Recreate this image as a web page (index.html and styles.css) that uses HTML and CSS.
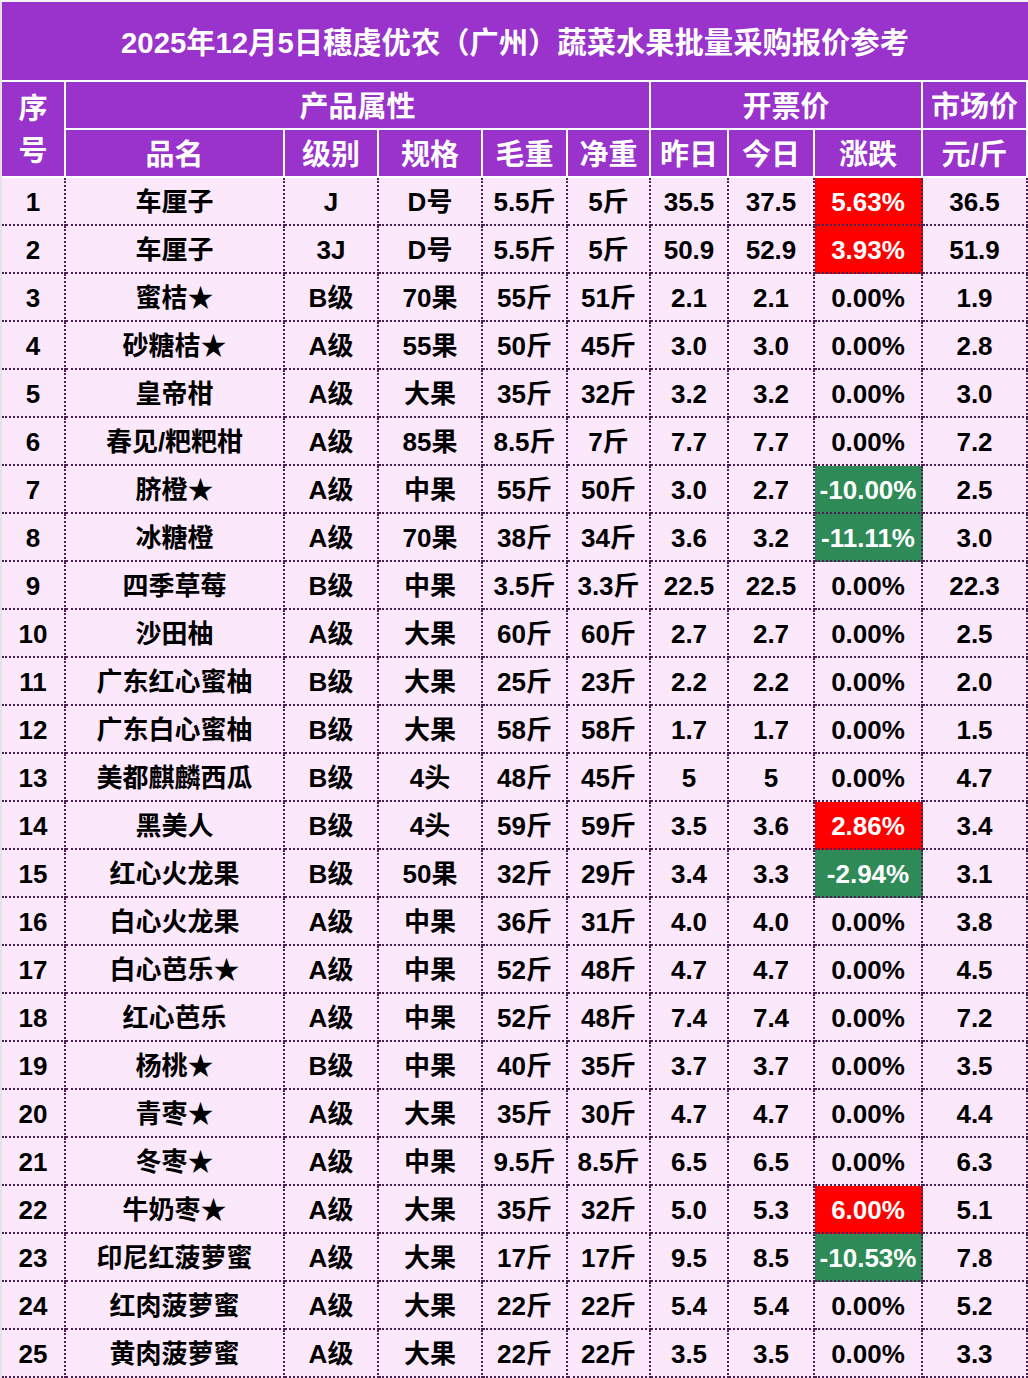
FILE: index.html
```html
<!DOCTYPE html>
<html lang="zh-CN">
<head>
<meta charset="utf-8">
<title>报价参考</title>
<link rel="stylesheet" href="styles.css">
</head>
<body>
<div class="page">
<div class="sheet">
  <div class="h title">2025年12月5日穗虔优农（广州）蔬菜水果批量采购报价参考</div>
  <div class="h seq">序<br>号</div>
  <div class="h span5">产品属性</div>
  <div class="h span3">开票价</div>
  <div class="h">市场价</div>
  <div class="h">品名</div><div class="h">级别</div><div class="h">规格</div><div class="h">毛重</div><div class="h">净重</div><div class="h">昨日</div><div class="h">今日</div><div class="h">涨跌</div><div class="h">元/斤</div>

  <div class="d">1</div><div class="d">车厘子</div><div class="d">J</div><div class="d">D号</div><div class="d">5.5斤</div><div class="d">5斤</div><div class="d">35.5</div><div class="d">37.5</div><div class="d up">5.63%</div><div class="d">36.5</div>
  <div class="d">2</div><div class="d">车厘子</div><div class="d">3J</div><div class="d">D号</div><div class="d">5.5斤</div><div class="d">5斤</div><div class="d">50.9</div><div class="d">52.9</div><div class="d up">3.93%</div><div class="d">51.9</div>
  <div class="d">3</div><div class="d">蜜桔★</div><div class="d">B级</div><div class="d">70果</div><div class="d">55斤</div><div class="d">51斤</div><div class="d">2.1</div><div class="d">2.1</div><div class="d">0.00%</div><div class="d">1.9</div>
  <div class="d">4</div><div class="d">砂糖桔★</div><div class="d">A级</div><div class="d">55果</div><div class="d">50斤</div><div class="d">45斤</div><div class="d">3.0</div><div class="d">3.0</div><div class="d">0.00%</div><div class="d">2.8</div>
  <div class="d">5</div><div class="d">皇帝柑</div><div class="d">A级</div><div class="d">大果</div><div class="d">35斤</div><div class="d">32斤</div><div class="d">3.2</div><div class="d">3.2</div><div class="d">0.00%</div><div class="d">3.0</div>
  <div class="d">6</div><div class="d">春见/粑粑柑</div><div class="d">A级</div><div class="d">85果</div><div class="d">8.5斤</div><div class="d">7斤</div><div class="d">7.7</div><div class="d">7.7</div><div class="d">0.00%</div><div class="d">7.2</div>
  <div class="d">7</div><div class="d">脐橙★</div><div class="d">A级</div><div class="d">中果</div><div class="d">55斤</div><div class="d">50斤</div><div class="d">3.0</div><div class="d">2.7</div><div class="d down">-10.00%</div><div class="d">2.5</div>
  <div class="d">8</div><div class="d">冰糖橙</div><div class="d">A级</div><div class="d">70果</div><div class="d">38斤</div><div class="d">34斤</div><div class="d">3.6</div><div class="d">3.2</div><div class="d down">-11.11%</div><div class="d">3.0</div>
  <div class="d">9</div><div class="d">四季草莓</div><div class="d">B级</div><div class="d">中果</div><div class="d">3.5斤</div><div class="d">3.3斤</div><div class="d">22.5</div><div class="d">22.5</div><div class="d">0.00%</div><div class="d">22.3</div>
  <div class="d">10</div><div class="d">沙田柚</div><div class="d">A级</div><div class="d">大果</div><div class="d">60斤</div><div class="d">60斤</div><div class="d">2.7</div><div class="d">2.7</div><div class="d">0.00%</div><div class="d">2.5</div>
  <div class="d">11</div><div class="d">广东红心蜜柚</div><div class="d">B级</div><div class="d">大果</div><div class="d">25斤</div><div class="d">23斤</div><div class="d">2.2</div><div class="d">2.2</div><div class="d">0.00%</div><div class="d">2.0</div>
  <div class="d">12</div><div class="d">广东白心蜜柚</div><div class="d">B级</div><div class="d">大果</div><div class="d">58斤</div><div class="d">58斤</div><div class="d">1.7</div><div class="d">1.7</div><div class="d">0.00%</div><div class="d">1.5</div>
  <div class="d">13</div><div class="d">美都麒麟西瓜</div><div class="d">B级</div><div class="d">4头</div><div class="d">48斤</div><div class="d">45斤</div><div class="d">5</div><div class="d">5</div><div class="d">0.00%</div><div class="d">4.7</div>
  <div class="d">14</div><div class="d">黑美人</div><div class="d">B级</div><div class="d">4头</div><div class="d">59斤</div><div class="d">59斤</div><div class="d">3.5</div><div class="d">3.6</div><div class="d up">2.86%</div><div class="d">3.4</div>
  <div class="d">15</div><div class="d">红心火龙果</div><div class="d">B级</div><div class="d">50果</div><div class="d">32斤</div><div class="d">29斤</div><div class="d">3.4</div><div class="d">3.3</div><div class="d down">-2.94%</div><div class="d">3.1</div>
  <div class="d">16</div><div class="d">白心火龙果</div><div class="d">A级</div><div class="d">中果</div><div class="d">36斤</div><div class="d">31斤</div><div class="d">4.0</div><div class="d">4.0</div><div class="d">0.00%</div><div class="d">3.8</div>
  <div class="d">17</div><div class="d">白心芭乐★</div><div class="d">A级</div><div class="d">中果</div><div class="d">52斤</div><div class="d">48斤</div><div class="d">4.7</div><div class="d">4.7</div><div class="d">0.00%</div><div class="d">4.5</div>
  <div class="d">18</div><div class="d">红心芭乐</div><div class="d">A级</div><div class="d">中果</div><div class="d">52斤</div><div class="d">48斤</div><div class="d">7.4</div><div class="d">7.4</div><div class="d">0.00%</div><div class="d">7.2</div>
  <div class="d">19</div><div class="d">杨桃★</div><div class="d">B级</div><div class="d">中果</div><div class="d">40斤</div><div class="d">35斤</div><div class="d">3.7</div><div class="d">3.7</div><div class="d">0.00%</div><div class="d">3.5</div>
  <div class="d">20</div><div class="d">青枣★</div><div class="d">A级</div><div class="d">大果</div><div class="d">35斤</div><div class="d">30斤</div><div class="d">4.7</div><div class="d">4.7</div><div class="d">0.00%</div><div class="d">4.4</div>
  <div class="d">21</div><div class="d">冬枣★</div><div class="d">A级</div><div class="d">中果</div><div class="d">9.5斤</div><div class="d">8.5斤</div><div class="d">6.5</div><div class="d">6.5</div><div class="d">0.00%</div><div class="d">6.3</div>
  <div class="d">22</div><div class="d">牛奶枣★</div><div class="d">A级</div><div class="d">大果</div><div class="d">35斤</div><div class="d">32斤</div><div class="d">5.0</div><div class="d">5.3</div><div class="d up">6.00%</div><div class="d">5.1</div>
  <div class="d">23</div><div class="d">印尼红菠萝蜜</div><div class="d">A级</div><div class="d">大果</div><div class="d">17斤</div><div class="d">17斤</div><div class="d">9.5</div><div class="d">8.5</div><div class="d down">-10.53%</div><div class="d">7.8</div>
  <div class="d">24</div><div class="d">红肉菠萝蜜</div><div class="d">A级</div><div class="d">大果</div><div class="d">22斤</div><div class="d">22斤</div><div class="d">5.4</div><div class="d">5.4</div><div class="d">0.00%</div><div class="d">5.2</div>
  <div class="d">25</div><div class="d">黄肉菠萝蜜</div><div class="d">A级</div><div class="d">大果</div><div class="d">22斤</div><div class="d">22斤</div><div class="d">3.5</div><div class="d">3.5</div><div class="d">0.00%</div><div class="d">3.3</div>
</div>
</div>
</body>
</html>
```
FILE: styles.css
```css
html, body {
  margin: 0;
  padding: 0;
  background: #ffffff;
}
.page {
  width: 1026px;
  border-left: 2px solid #e3e3e3;
  border-top: 2px solid #f4f4f4;
  font-family: "Liberation Sans", "Noto Sans CJK SC", sans-serif;
  font-weight: bold;
}
.sheet {
  display: grid;
  grid-template-columns: 64px 219px 94px 104px 85px 83px 78px 86px 108px 105px;
  grid-template-rows: 80px 48px 48px;
  grid-auto-rows: 48px;
}
.sheet > div {
  box-sizing: border-box;
  display: flex;
  align-items: center;
  justify-content: center;
  white-space: nowrap;
  padding: 0;
  overflow: hidden;
  line-height: 32px;
}
.h {
  background: #9933cc;
  color: #ffffff;
  font-size: 29px;
  border-right: 2px solid #ffffff;
  border-bottom: 2px solid #ffffff;
}
.sheet > .h {
  padding-top: 3px;
}
.title {
  grid-column: 1 / span 10;
  font-size: 29.3px;
  border-right: none;
}
.sheet > .seq {
  grid-row: span 2;
  text-align: center;
  line-height: 42px;
  padding-top: 2px;
}
.span5 { grid-column: span 5; }
.span3 { grid-column: span 3; }
.d {
  background: #fbe8fb;
  color: #000000;
  font-size: 26px;
  border-right: 2px dotted #4a1f52;
  border-bottom: 2px dotted #4a1f52;
}
.sheet > .d {
  padding-top: 2px;
}
.d.up {
  background: #ff0000;
  color: #ffffff;
}
.d.down {
  background: #2e8b57;
  color: #ffffff;
}
```
